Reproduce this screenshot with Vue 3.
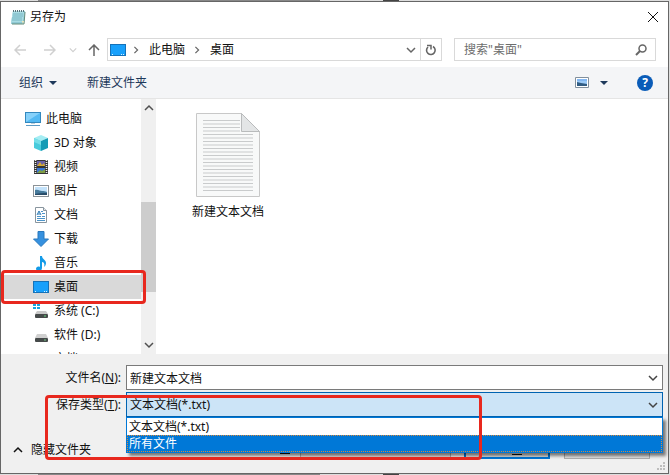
<template>
  <div class="backdrop">
    <svg class="symbols" width="0" height="0" aria-hidden="true">
      <symbol id="notepad" viewBox="0 0 16 16">
        <path d="M3 2h12l-1 13H1z" fill="#8fc9d4" />
        <path d="M3 2h11l-1 11H1z" fill="#a9dce3" />
        <path d="M3 5h10M3 7h10M2 9h10M2 11h10" stroke="#78b5c3" />
        <path d="M3 2h12" stroke="#59737a" stroke-width="2" stroke-dasharray="1 1" />
        <path d="M15 3l-1 12H2" fill="none" stroke="#648b7b" />
        <path d="M12 12h2l-1 3z" fill="#f4e9b5" />
      </symbol>
      <symbol id="desktop" viewBox="0 0 16 16">
        <rect x=".5" y="2.5" width="15" height="11" fill="#18a0fb" stroke="#1672b8" />
        <path d="M2 12.5h1M11 12.5h1M13 12.5h1" stroke="#d6f2ff" />
      </symbol>
      <symbol id="pc" viewBox="0 0 16 16">
        <rect x=".5" y="1.5" width="15" height="10" fill="#53b9f3" stroke="#3388be" />
        <path d="M1 11V2h14z" fill="#86d1fa" />
        <path d="M6 12h4v1H6z" fill="#bcd0dc" />
        <path d="M1 14.5h14" stroke="#5f9bc4" />
      </symbol>
      <symbol id="cube" viewBox="0 0 16 16">
        <path d="M8 0l7 3-7 3-7-3z" fill="#a5edf3" />
        <path d="M1 3l7 3v10l-7-3z" fill="#48cbdc" />
        <path d="M15 3L8 6v10l7-3z" fill="#159bb5" />
        <path d="M1 3l7 3v4L1 7z" fill="#75dfe8" />
      </symbol>
      <symbol id="video" viewBox="0 0 16 16">
        <path d="M1 1h14v14H1z" fill="#353535" />
        <path d="M2.5 1v14M13.5 1v14" stroke="#ececec" stroke-width="1.6" stroke-dasharray="1 1" />
        <path d="M4 2h8v5H4z" fill="#6b62a8" />
        <path d="M4 7l3-4 2 3 2-2 1 3z" fill="#d5aa31" />
        <path d="M4 9h8v5H4z" fill="#3977d4" />
        <path d="M4 14l3-3 2 1 3-2v4z" fill="#7e9d45" />
      </symbol>
      <symbol id="picture" viewBox="0 0 16 16">
        <rect x=".5" y="2.5" width="15" height="11" fill="#fff" stroke="#8b9297" />
        <path d="M2 4h12v8H2z" fill="#c3e2fa" />
        <path d="M2 7c3-1 5 1 7 1s3 0 5 1v3H2z" fill="#477b9c" />
        <path d="M2 11c4-1 7-1 12-1v2H2z" fill="#294c69" />
      </symbol>
      <symbol id="document" viewBox="0 0 16 16">
        <path d="M2.5.5h8l3 3v12h-11z" fill="#fff" stroke="#89959e" />
        <path d="M10.5.5v3h3" fill="#e6eaed" stroke="#89959e" />
        <path d="M8 4.5h2M9 6.5h3M4 9.5h4M9 9.5h3M4 11.5h8M4 13.5h8" stroke="#4c94c9" />
        <path d="M4 8l2-4 2 4M5 7h2" fill="none" stroke="#2878b5" />
      </symbol>
      <symbol id="download" viewBox="0 0 16 16">
        <path d="M5 .5h6V8h4.500L8 15.500.500 8H5z" fill="#3691df" stroke="#2878bd" />
      </symbol>
      <symbol id="music" viewBox="0 0 16 16">
        <path d="M7 1h2c0 3 4 4 4 7 0 2-1 3-2 4 1-3 0-5-2-5v6c0 4-6 3-6 1 0-2 2-3 4-2z" fill="#139be8" />
      </symbol>
      <symbol id="system" viewBox="0 0 16 16">
        <path d="M0 1h3v2H0zM4 1h3v2H4zM0 4h3v2H0zM4 4h3v2H4z" fill="#16a6e0" />
        <path d="M4 8h9l2 3H2z" fill="#c8c8c8" />
        <rect x="2" y="11" width="13" height="4" rx="1" fill="#464a4a" />
        <path d="M11 13h2" stroke="#64d67e" />
      </symbol>
      <symbol id="drive" viewBox="0 0 16 16">
        <path d="M4 7h9l2 4H2z" fill="#d0d0d0" />
        <rect x="2" y="11" width="13" height="4" rx="1" fill="#464a4a" />
        <path d="M11 13h2" stroke="#72c583" />
      </symbol>
      <symbol id="left" viewBox="0 0 12 12">
        <path d="M12 6H1M6 1L1 6l5 5" fill="none" stroke="currentColor" stroke-width="1.500" />
      </symbol>
      <symbol id="down" viewBox="0 0 10 10">
        <path d="M1 3l4 4 4-4" fill="none" stroke="currentColor" stroke-width="1.500" />
      </symbol>
      <symbol id="triangle" viewBox="0 0 8 8">
        <path d="M0 2h8L4 6z" fill="currentColor" />
      </symbol>
    </svg>

    <main class="dialog">
      <header class="titlebar">
        <svg class="icon"><use href="#notepad" /></svg>
        <h1>另存为</h1>
        <button class="close" aria-label="关闭">
          <svg viewBox="0 0 12 12"><path d="M1 1l10 10M11 1L1 11" stroke="#111" /></svg>
        </button>
      </header>

      <nav class="navigation">
        <button class="arrow disabled" aria-label="后退"><svg><use href="#left" /></svg></button>
        <button class="arrow forward disabled" aria-label="前进"><svg><use href="#left" /></svg></button>
        <button class="history disabled" aria-label="历史记录"><svg><use href="#down" /></svg></button>
        <button class="arrow up" aria-label="上移"><svg><use href="#left" /></svg></button>
        <div class="address">
          <svg class="icon"><use href="#desktop" /></svg>
          <svg class="crumb"><use href="#down" /></svg>
          <a href="#" @click.prevent>此电脑</a>
          <svg class="crumb"><use href="#down" /></svg>
          <a href="#" @click.prevent>桌面</a>
          <button class="expand" aria-label="展开地址"><svg><use href="#down" /></svg></button>
          <button class="refresh" aria-label="刷新">
            <svg viewBox="0 0 12 12">
              <path d="M8 2.500A4.300 4.300 0 1 1 3 3" fill="none" stroke="currentColor" stroke-width="1.600" />
              <path d="M2 1.500h4v4" fill="none" stroke="currentColor" stroke-width="1.500" />
            </svg>
          </button>
        </div>
        <label class="search">
          <input v-model="keyword" type="text" placeholder="搜索&quot;桌面&quot;" aria-label="搜索" />
          <svg viewBox="0 0 12 12">
            <circle cx="7.500" cy="4.500" r="3.500" fill="none" stroke="#666" stroke-width="1.500" />
            <path d="M5 7L1 11" stroke="#666" stroke-width="2" />
          </svg>
        </label>
      </nav>

      <div class="toolbar">
        <button class="organize">组织<svg><use href="#triangle" /></svg></button>
        <button class="new-folder">新建文件夹</button>
        <button class="view" aria-label="更改视图">
          <svg class="view-icon" viewBox="0 0 14 11">
            <path d="M.5.5h13v10H.5z" fill="#fff" stroke="#82909d" />
            <path d="M2 2h10v7H2z" fill="#9bcaf7" />
            <path d="M2 5l4 1 6 1v2H2z" fill="#315c83" />
            <path d="M2 3h10" stroke="#6ba4ee" fill="none" />
          </svg>
          <svg><use href="#triangle" /></svg>
        </button>
        <button class="help" aria-label="帮助">?</button>
      </div>

      <section class="browser">
        <aside class="sidebar">
          <ul class="tree">
            <li v-for="item in folders" :key="item.text" :class="{ root: item.root, active: item.text === activeFolder }">
              <a href="#" @click.prevent="activeFolder = item.text">
                <svg class="icon"><use :href="'#' + item.icon" /></svg>{{ item.text }}
              </a>
            </li>
          </ul>
          <div class="scrollbar">
            <svg class="scroll-up"><use href="#down" /></svg>
            <div class="track"><div class="thumb"></div></div>
            <svg><use href="#down" /></svg>
          </div>
        </aside>
        <div class="files">
          <figure>
            <svg class="paper" viewBox="0 0 64 84">
              <path d="M.5.5h45l18 18v65H.5z" fill="#f8f9f9" stroke="#c8c8c8" />
              <path v-for="n in 21" :key="n" :d="`M7 ${4 + n * 3.500}H${n < 5 ? 44 : 57}`" stroke="#c9cbcc" />
              <path d="M45.500.5v18h18z" fill="#e3e5e6" stroke="#b9bbbc" />
            </svg>
            <figcaption>新建文本文档</figcaption>
          </figure>
        </div>
      </section>

      <footer class="footer">
        <div class="field">
          <label for="filename">文件名(<u>N</u>):</label>
          <div class="control">
            <input id="filename" v-model="fileName" type="text" />
            <svg><use href="#down" /></svg>
          </div>
        </div>
        <div class="field">
          <label for="filetype">保存类型(<u>T</u>):</label>
          <div class="control type">
            <select id="filetype" v-model="fileType">
              <option v-for="type in fileTypes" :key="type">{{ type }}</option>
            </select>
            <svg><use href="#down" /></svg>
            <ul class="options" role="listbox" aria-label="保存类型">
              <li
                v-for="type in fileTypes"
                :key="type"
                role="option"
                :aria-selected="type === fileType"
                :class="{ hover: type === hoverType }"
                @mouseenter="hoverType = type"
                @click="fileType = type"
              >{{ type }}</li>
            </ul>
          </div>
        </div>
        <div class="actions">
          <button class="hide-folders"><svg><use href="#down" /></svg>隐藏文件夹</button>
          <span class="mnemonic"></span>
          <button class="encoding" aria-label="编码"></button>
          <button class="save" aria-label="保存"><span class="mnemonic"></span></button>
          <button class="cancel" aria-label="取消"></button>
        </div>
        <div class="mark"></div>
        <svg class="grip" viewBox="0 0 9 9">
          <path d="M6 0h2v2H6zM3 3h2v2H3zM6 3h2v2H6zM0 6h2v2H0zM3 6h2v2H3zM6 6h2v2H6z" fill="#bdbdbd" />
        </svg>
      </footer>
    </main>
  </div>
</template>

<script setup>
import { ref } from 'vue';

const folders = [
  { text: '此电脑', icon: 'pc', root: true },
  { text: '3D 对象', icon: 'cube' },
  { text: '视频', icon: 'video' },
  { text: '图片', icon: 'picture' },
  { text: '文档', icon: 'document' },
  { text: '下载', icon: 'download' },
  { text: '音乐', icon: 'music' },
  { text: '桌面', icon: 'desktop' },
  { text: '系统 (C:)', icon: 'system' },
  { text: '软件 (D:)', icon: 'drive' },
  { text: '文档 (E:)', icon: 'drive' },
];

const fileTypes = ['文本文档(*.txt)', '所有文件'];

const activeFolder = ref('桌面');
const keyword = ref('');
const fileName = ref('新建文本文档');
const fileType = ref(fileTypes[0]);
const hoverType = ref(fileTypes[1]);
</script>

<style>
body {
  margin: 0;
}
</style>

<style scoped>
* {
  box-sizing: border-box;
}
.backdrop {
  height: 100vh;
  padding: 1px 1px 1px 0;
  background: linear-gradient(90deg, #ddd 38px, #888 38px 320px, #ddd 320px 383px, #444 383px 399px, #ddd 399px);
  font: 12px/16px "Noto Sans", "Noto Sans CJK SC", sans-serif;
  color: #111;
}
.symbols {
  position: absolute;
}
.dialog {
  display: flex;
  flex-direction: column;
  height: 100%;
  border: 1px solid #666;
  background: #fff;
}
button, input, select {
  font: inherit;
  color: inherit;
  border: 0;
  padding: 0;
  background: none;
}
button {
  display: flex;
  align-items: center;
}
a {
  color: inherit;
  text-decoration: none;
}
ul {
  list-style: none;
  margin: 0;
  padding: 0;
}
svg {
  flex: none;
  width: 10px;
  height: 10px;
}
.icon {
  width: 16px;
  height: 16px;
}

/* 标题栏 */
.titlebar {
  display: flex;
  align-items: center;
  height: 30px;
  padding: 0 9px;
}
h1 {
  margin: 0 auto 0 4px;
  font-size: 12px;
  font-weight: normal;
}
.close svg {
  width: 12px;
  height: 12px;
}

/* 导航 */
.navigation {
  display: flex;
  align-items: center;
  height: 35px;
  padding: 0 12px 0 13px;
  color: #666;
}
.arrow svg {
  width: 12px;
  height: 12px;
}
.forward {
  margin-left: 18px;
}
.forward svg {
  transform: rotate(180deg);
}
.history {
  margin: 0 11px 0 13px;
}
.history svg {
  width: 8px;
  height: 8px;
}
.up svg {
  transform: rotate(90deg);
}
.disabled {
  color: #d0d0d0;
}
.address {
  display: flex;
  align-items: center;
  flex: 1;
  height: 23px;
  margin: 0 12px 0 7px;
  padding-left: 2px;
  border: 1px solid #d9d9d9;
}
.address a {
  color: #111;
}
.crumb {
  width: 8px;
  height: 8px;
  margin: 0 9px 0 6px;
  transform: rotate(-90deg);
}
a + .crumb {
  margin-left: 8px;
}
.expand {
  margin-left: auto;
  margin-right: 4px;
}
.refresh {
  justify-content: center;
  align-self: stretch;
  width: 21px;
  border-left: 1px solid #d9d9d9;
}
.refresh svg, .search svg {
  width: 12px;
  height: 12px;
}
.search {
  display: flex;
  align-items: center;
  width: 202px;
  height: 23px;
  padding: 0 8px 0 9px;
  border: 1px solid #d9d9d9;
}
.search input {
  flex: 1;
  min-width: 0;
  outline: 0;
}
.search input::placeholder {
  color: #6d6d6d;
}

/* 工具栏 */
.toolbar {
  display: flex;
  align-items: center;
  height: 32px;
  padding: 0 15px 0 18px;
  border-bottom: 1px solid #e5e5e5;
  background: #f4f5f7;
  color: #1e395b;
}
.toolbar svg {
  width: 8px;
  height: 8px;
}
.organize, .view {
  gap: 6px;
}
.new-folder {
  margin-left: 30px;
}
.view {
  gap: 11px;
  margin-left: auto;
}
.toolbar .view-icon {
  width: 14px;
  height: 11px;
}
.help {
  justify-content: center;
  width: 16px;
  height: 16px;
  margin-left: 29px;
  border-radius: 50%;
  background: #0a5cb8;
  color: #fff;
  font-weight: bold;
}

/* 文件浏览 */
.browser {
  display: flex;
  flex: 1;
  min-height: 0;
}
.sidebar {
  display: flex;
  width: 155px;
}
.tree {
  flex: 1;
  padding-top: 8px;
  overflow-x: visible;
  overflow-y: clip;
}
.tree li {
  position: relative;
  height: 24px;
}
.tree a {
  display: flex;
  align-items: center;
  gap: 5px;
  height: 24px;
  padding-left: 32px;
  white-space: nowrap;
}
.tree .root a {
  padding-left: 24px;
}
.active {
  background: #d9d9d9;
}
/* 红框标记 */
.active::after {
  content: "";
  position: absolute;
  z-index: 1;
  inset: -5px -5px -5px 0;
  border: 3px solid #e8281e;
  border-radius: 4px;
  pointer-events: none;
}
.scrollbar {
  display: flex;
  flex-direction: column;
  align-items: center;
  width: 15px;
  padding: 4px 0;
  background: #f0f0f0;
  color: #505050;
}
.scroll-up {
  transform: rotate(180deg);
}
.track {
  flex: 1;
  align-self: stretch;
  display: grid;
  grid-template-rows: 39% 40%;
}
.thumb {
  grid-row: 2;
  background: #cdcdcd;
}
.files {
  flex: 1;
  padding: 14px 30px;
}
figure {
  display: flex;
  flex-direction: column;
  align-items: center;
  gap: 7px;
  width: 84px;
  margin: 0;
}
.paper {
  width: 64px;
  height: 84px;
}

/* 底部 */
.footer {
  position: relative;
  padding: 11px 5px 13px 0;
  background: #f0f0f0;
}
.field {
  display: flex;
  align-items: center;
  margin-bottom: 2px;
}
.field label {
  width: 120px;
  margin-right: 5px;
  text-align: right;
}
.control {
  position: relative;
  display: flex;
  align-items: center;
  flex: 1;
  height: 25px;
  padding-right: 4px;
  border: 1px solid #7a7a7a;
  background: #fff;
}
.control input, .control select {
  flex: 1;
  min-width: 0;
  height: 100%;
  padding: 0 3px;
  outline: 0;
  appearance: none;
}
.control svg {
  color: #444;
}
.type {
  border-color: #0063b1;
  background: #cce4f7;
}
.options {
  position: absolute;
  z-index: 1;
  top: 24px;
  left: -1px;
  right: -1px;
  border: 1px solid #0078d7;
  background: #fff;
  box-shadow: 3px 3px 3px rgba(0, 0, 0, 0.5);
}
.options li {
  height: 17px;
  padding-left: 2px;
  line-height: 17px;
}
.options .hover {
  border: 1px dotted #d98a3b;
  padding-left: 1px;
  line-height: 15px;
  background: #0078d7;
  color: #fff;
}
.actions {
  display: flex;
  align-items: flex-start;
  height: 41px;
  padding: 17px 13px 0 12px;
}
.hide-folders {
  gap: 8px;
  margin-top: 6px;
  margin-right: auto;
}
.hide-folders svg {
  transform: rotate(180deg);
}
.mnemonic {
  width: 10px;
  height: 1px;
  margin-top: 17px;
  background: #111;
}
.encoding {
  width: 151px;
  height: 23px;
  margin: 0 13px 0 10px;
  border: 1px solid #adadad;
  background: #e1e1e1;
}
.save {
  justify-content: center;
  width: 86px;
  height: 23px;
  margin-right: 14px;
  border: 2px solid #0078d7;
  background: #e1e1e1;
}
.save .mnemonic {
  margin-top: 14px;
  margin-left: 20px;
}
.cancel {
  width: 86px;
  height: 23px;
  border: 1px solid #adadad;
  background: #e1e1e1;
}
.mark {
  position: absolute;
  z-index: 2;
  top: 41px;
  left: 44px;
  width: 437px;
  height: 65px;
  border: 3px solid #e8281e;
  border-radius: 4px;
  pointer-events: none;
}
.grip {
  position: absolute;
  right: 2px;
  bottom: 2px;
  width: 9px;
  height: 9px;
}
</style>
